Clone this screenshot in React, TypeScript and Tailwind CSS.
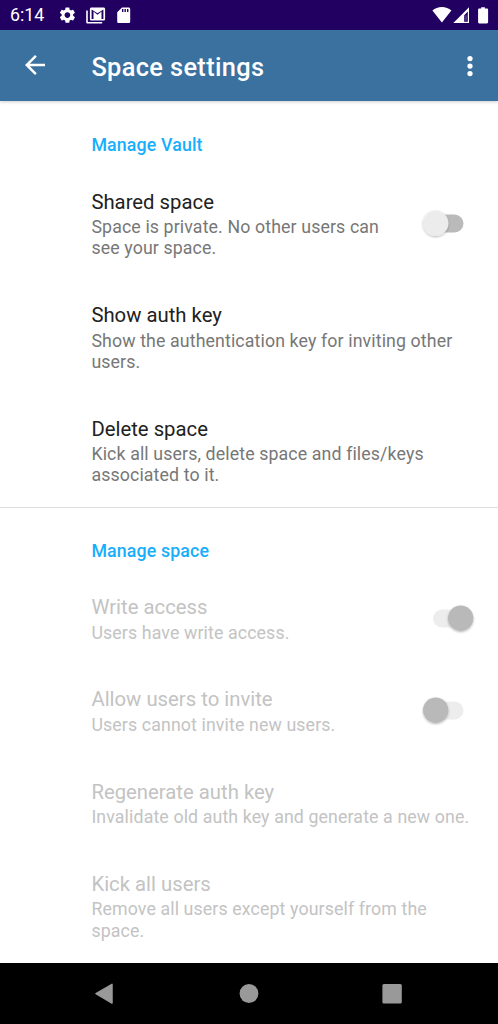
import { ReactNode } from "react";

type SwitchProps = { on?: boolean; disabled?: boolean };

function Switch({ on = false, disabled = false }: SwitchProps) {
  return (
    <svg
      role="switch"
      aria-checked={on}
      className="h-10 w-14 shrink-0 overflow-visible"
      viewBox="0 0 56 40"
    >
      <defs>
        <filter id="thumb" x="-30%" y="-30%" width="160%" height="160%">
          <feDropShadow dx="0" dy="1" stdDeviation="0.8" floodOpacity="0.28" />
        </filter>
      </defs>
      <rect
        x="13"
        y="10.5"
        width={on ? 28 : 30.5}
        height="18"
        rx="9"
        fill={disabled ? "#ededed" : "#bababa"}
      />
      <circle
        cx={on ? 40.7 : 15.7}
        cy="19.2"
        r="12.7"
        fill={disabled ? "#b9b9b9" : "#ececec"}
        filter="url(#thumb)"
      />
    </svg>
  );
}

type RowProps = {
  title: string;
  lines: string[];
  disabled?: boolean;
  control?: ReactNode;
};

function Row({ title, lines, disabled = false, control }: RowProps) {
  return (
    <div
      className={
        lines.length > 1
          ? "flex h-[113.5px] shrink-0 items-start pl-[91.4px]"
          : "flex h-[92.3px] shrink-0 items-start pl-[91.4px]"
      }
    >
      <div className={disabled ? "grow pt-[23px] text-[#c3c3c3]" : "grow pt-[23px] text-[#212121]"}>
        <div className="text-[20.3px] leading-6 tracking-[0.01px] whitespace-nowrap">{title}</div>
        <div
          className={
            disabled
              ? "pt-[3.6px] text-[17.75px] leading-[21.2px] tracking-[0.12px] whitespace-nowrap"
              : "pt-[3.6px] text-[17.75px] leading-[21.2px] tracking-[0.12px] whitespace-nowrap text-[#777777]"
          }
        >
          {lines.map((line) => (
            <div key={line}>{line}</div>
          ))}
        </div>
      </div>
      {control && (
        <div className={lines.length > 1 ? "mr-[22px] pt-[37.3px]" : "mr-[22px] pt-[27px]"}>{control}</div>
      )}
    </div>
  );
}

function Heading({ children }: { children: string }) {
  return (
    <h2 className="text-[17.75px] leading-6 font-medium tracking-[0.15px] text-[#17aefc]">{children}</h2>
  );
}

function StatusBar() {
  return (
    <div className="flex h-[30px] shrink-0 items-center bg-[#210062] text-white">
      <span className="w-[56px] pl-[10px] text-[17.75px] leading-[30px]">6:14</span>
      <svg className="h-[20px] w-[82px]" viewBox="0 0 82 20" fill="currentColor">
        <g transform="translate(1.8 .5) scale(.8)">
          <path d="M19.14 12.94c.04-.3.06-.61.06-.94 0-.32-.02-.64-.07-.94l2.03-1.58c.18-.14.23-.41.12-.61l-1.92-3.32c-.12-.22-.37-.29-.59-.22l-2.39.96c-.5-.38-1.03-.7-1.62-.94l-.36-2.54c-.04-.24-.24-.41-.48-.41h-3.84c-.24 0-.43.17-.47.41l-.36 2.54c-.59.24-1.13.57-1.62.94l-2.39-.96c-.22-.08-.47 0-.59.22L2.74 8.87c-.12.21-.08.47.12.61l2.03 1.58c-.05.3-.09.63-.09.94s.02.64.07.94l-2.03 1.58c-.18.14-.23.41-.12.61l1.92 3.32c.12.22.37.29.59.22l2.39-.96c.5.38 1.03.7 1.62.94l.36 2.54c.05.24.24.41.48.41h3.84c.24 0 .44-.17.47-.41l.36-2.54c.59-.24 1.13-.56 1.62-.94l2.39.96c.22.08.47 0 .59-.22l1.92-3.32c.12-.22.07-.47-.12-.61l-2.01-1.58zM12 15.6c-1.98 0-3.6-1.62-3.6-3.6s1.62-3.6 3.6-3.6 3.6 1.62 3.6 3.6-1.62 3.6-3.6 3.6z" />
        </g>
        <path d="M30.2 5.5h1.6v11.4h14.4v1.6H31.8c-.9 0-1.6-.7-1.6-1.6z" />
        <path
          fillRule="evenodd"
          d="M35.5 2.5h12c.9 0 1.6.7 1.6 1.6v9.8c0 .9-.7 1.6-1.6 1.6h-12c-.9 0-1.6-.7-1.6-1.6V4.1c0-.9.7-1.6 1.6-1.6zM35.6 4.4v9.5h1.9V6.6l4 3.1 4-3.1v7.3h1.9V4.4l-5.9 3.9z"
        />
        <path
          fillRule="evenodd"
          d="M66 2.5h6.6c.9 0 1.6.7 1.6 1.6v12.4c0 .9-.7 1.6-1.6 1.6h-9.8c-.9 0-1.6-.7-1.6-1.6V7.2zm0 1.5v3h1.4V4zm2.5 0v3h1.4V4zm2.5 0v3h1.4V4z"
        />
      </svg>
      <svg className="ml-auto h-[20px] w-[68px]" viewBox="0 0 68 20" fill="currentColor">
        <path d="M2.4 5.5C5 3.2 8.2 2 11.9 2s6.9 1.2 9.5 3.5l-9.5 12z" />
        <path fillRule="evenodd" d="M39 2.3V18H23.3zM37.8 6.6l-3.6 3.6v6.5h3.6z" />
        <path d="M35.4 10.2h1.2v5.6h-1.2z" fillOpacity=".35" />
        <path d="M51.2 2.2h3.7v1.4h2c.7 0 1.2.5 1.2 1.2v12.5c0 .7-.5 1.2-1.2 1.2h-7.6c-.7 0-1.2-.5-1.2-1.2V4.8c0-.7.5-1.2 1.2-1.2h1.9z" />
      </svg>
    </div>
  );
}

export default function App() {
  return (
    <div className="flex h-[1024px] w-[498px] flex-col overflow-hidden bg-white font-['Roboto',sans-serif]">
      <StatusBar />
      <header className="z-10 flex h-[71px] shrink-0 items-center bg-[#3a719f] text-white shadow-[0_1px_3px_rgba(0,0,0,0.2)]">
        <button aria-label="Back" className="w-[91.4px] pb-px pl-5">
          <svg className="size-[30px]" viewBox="0 0 24 24" fill="currentColor">
            <path d="M20 11H7.83l5.59-5.59L12 4l-8 8 8 8 1.41-1.41L7.83 13H20v-2z" />
          </svg>
        </button>
        <h1 className="grow pt-[2px] text-[25.4px] leading-8 font-medium tracking-[0.35px]">Space settings</h1>
        <button aria-label="More options" className="mr-[13px]">
          <svg className="size-[30px]" viewBox="0 0 24 24" fill="currentColor">
            <circle cx="12" cy="6" r="2.1" />
            <circle cx="12" cy="12" r="2.1" />
            <circle cx="12" cy="18" r="2.1" />
          </svg>
        </button>
      </header>
      <main className="flex h-[862px] shrink-0 flex-col overflow-hidden">
        <section className="flex h-[406px] shrink-0 flex-col">
          <div className="h-[65.6px] shrink-0 pt-[32px] pl-[91.4px]">
            <Heading>Manage Vault</Heading>
          </div>
          <Row
            title="Shared space"
            lines={["Space is private. No other users can", "see your space."]}
            control={<Switch />}
          />
          <Row title="Show auth key" lines={["Show the authentication key for inviting other", "users."]} />
          <Row
            title="Delete space"
            lines={["Kick all users, delete space and files/keys", "associated to it."]}
          />
        </section>
        <section className="flex shrink-0 flex-col border-t border-[#dedede]">
          <div className="h-[64px] shrink-0 pt-[31px] pl-[91.4px]">
            <Heading>Manage space</Heading>
          </div>
          <Row title="Write access" lines={["Users have write access."]} disabled control={<Switch on disabled />} />
          <Row
            title="Allow users to invite"
            lines={["Users cannot invite new users."]}
            disabled
            control={<Switch disabled />}
          />
          <Row title="Regenerate auth key" lines={["Invalidate old auth key and generate a new one."]} disabled />
          <Row title="Kick all users" lines={["Remove all users except yourself from the", "space."]} disabled />
        </section>
      </main>
      <nav className="h-[61px] shrink-0 bg-black">
        <svg className="h-[61px] w-[498px]" viewBox="0 0 498 61" fill="#999999">
          <path d="M96 30.6 112 21.4V40z" stroke="#999999" strokeWidth="1.5" strokeLinejoin="round" />
          <circle cx="249" cy="30.5" r="9.4" />
          <rect x="382.4" y="21" width="19.4" height="19.4" rx="1.5" />
        </svg>
      </nav>
    </div>
  );
}
